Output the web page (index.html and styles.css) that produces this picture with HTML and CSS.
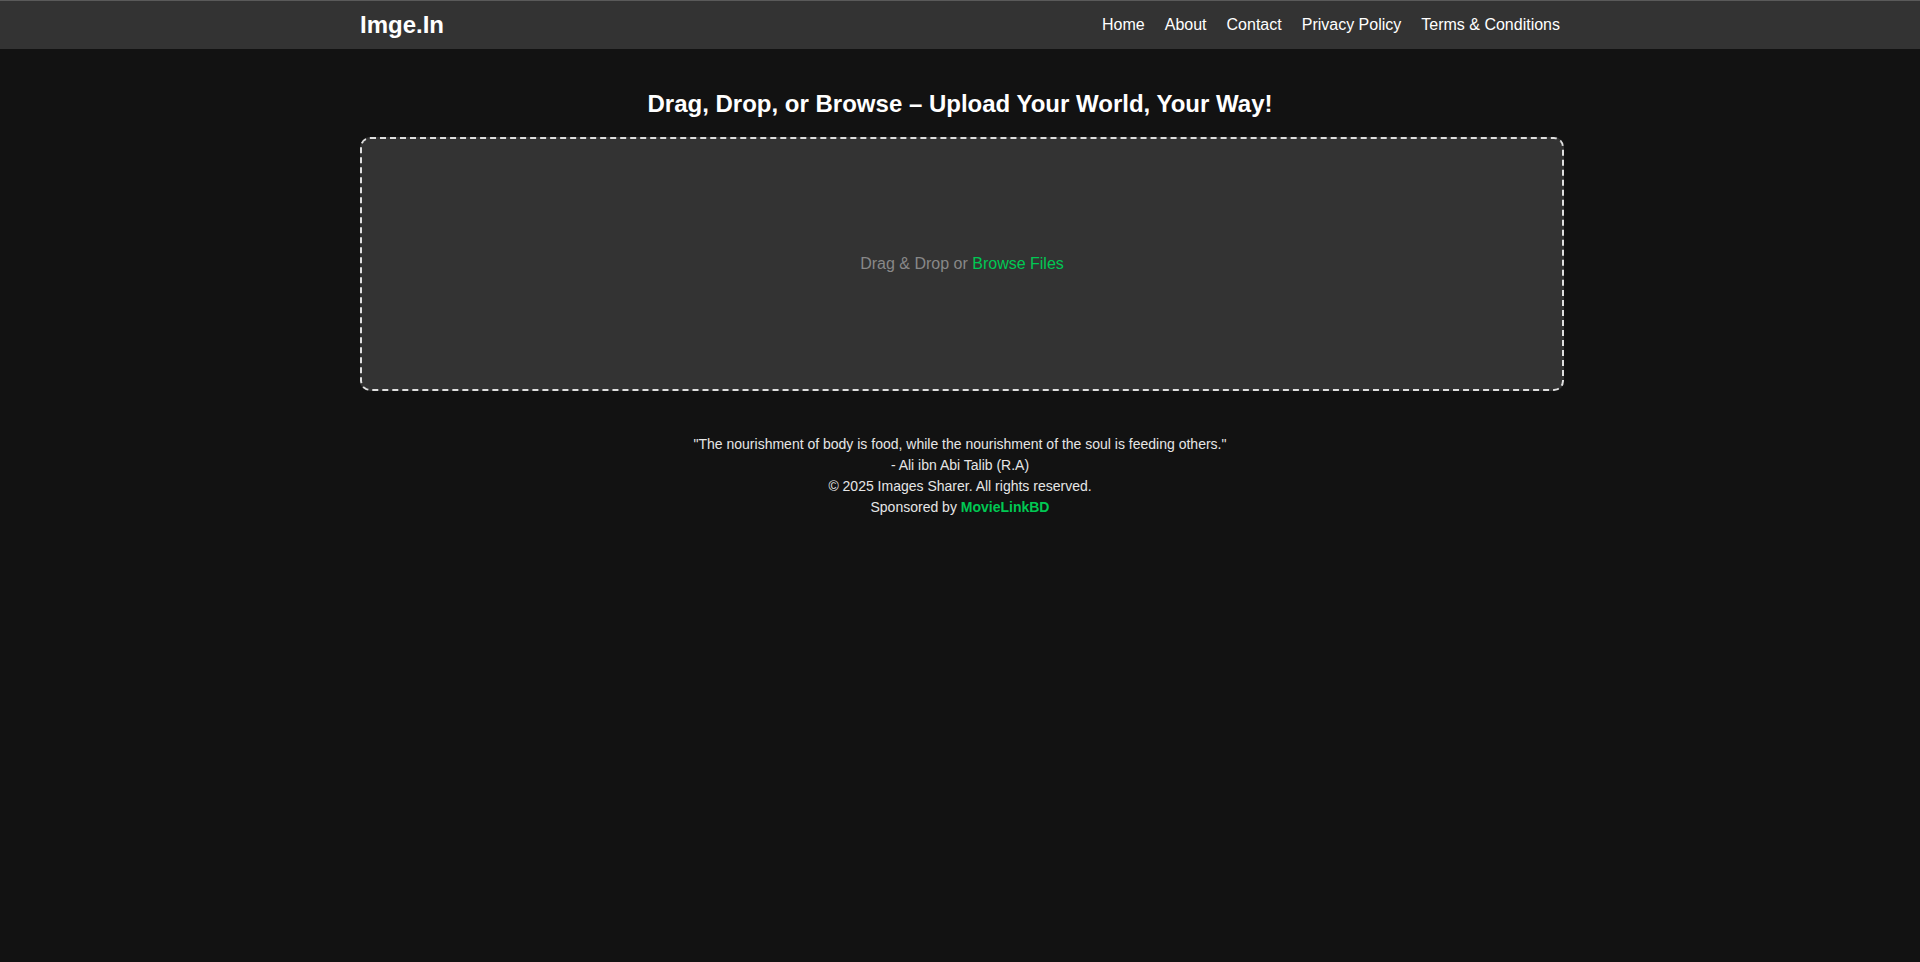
FILE: index.html
```html
<!DOCTYPE html>
<html lang="en">
<head>
<meta charset="UTF-8">
<title>Imge.In</title>
<link rel="stylesheet" href="styles.css">
</head>
<body>
<header class="site-header">
  <div class="container header-inner">
    <a class="logo" href="#">Imge.In</a>
    <nav class="nav">
      <a href="#">Home</a>
      <a href="#">About</a>
      <a href="#">Contact</a>
      <a href="#">Privacy Policy</a>
      <a href="#">Terms &amp; Conditions</a>
    </nav>
  </div>
</header>
<main class="container main">
  <h2 class="title">Drag, Drop, or Browse – Upload Your World, Your Way!</h2>
  <div class="dropzone">
    <p class="drop-text">Drag &amp; Drop or <span class="browse">Browse Files</span></p>
  </div>
</main>
<footer class="footer">
  <p>"The nourishment of body is food, while the nourishment of the soul is feeding others."</p>
  <p>- Ali ibn Abi Talib (R.A)</p>
  <p>© 2025 Images Sharer. All rights reserved.</p>
  <p>Sponsored by <a href="#" class="sponsor">MovieLinkBD</a></p>
</footer>
</body>
</html>
```
FILE: styles.css
```css
* { box-sizing: border-box; }
html, body { margin: 0; padding: 0; }
body {
  background: #121212;
  color: #fff;
  font-family: "Liberation Sans", Arial, sans-serif;
}
.container {
  width: 1200px;
  margin: 0 auto;
}
.site-header {
  background: #333;
  border-top: 1px solid #5a5a5a;
  height: 49px;
}
.header-inner {
  display: flex;
  align-items: center;
  justify-content: space-between;
  height: 48px;
}
.logo {
  color: #fff;
  text-decoration: none;
  font-weight: bold;
  font-size: 24px;
}
.nav {
  display: flex;
  gap: 20px;
}
.nav a {
  color: #fff;
  text-decoration: none;
  font-size: 16px;
}
.main {
  padding-top: 20px;
}
.title {
  text-align: center;
  font-size: 24px;
  font-weight: bold;
  margin: 21px 0 19px;
  line-height: 28px;
}
.dropzone {
  width: 1204px;
  height: 254px;
  border: 2px dashed #e0e0e0;
  border-radius: 10px;
  background: #333;
  display: flex;
  align-items: center;
  justify-content: center;
}
.drop-text {
  margin: 0;
  font-size: 16px;
  color: #888;
}
.browse {
  color: #00c853;
  cursor: pointer;
}
.footer {
  text-align: center;
  padding-top: 43px;
  font-size: 14px;
  line-height: 21px;
  color: #e6e6e6;
}
.footer p { margin: 0; }
.sponsor {
  color: #00c853;
  font-weight: bold;
  text-decoration: none;
}
```
